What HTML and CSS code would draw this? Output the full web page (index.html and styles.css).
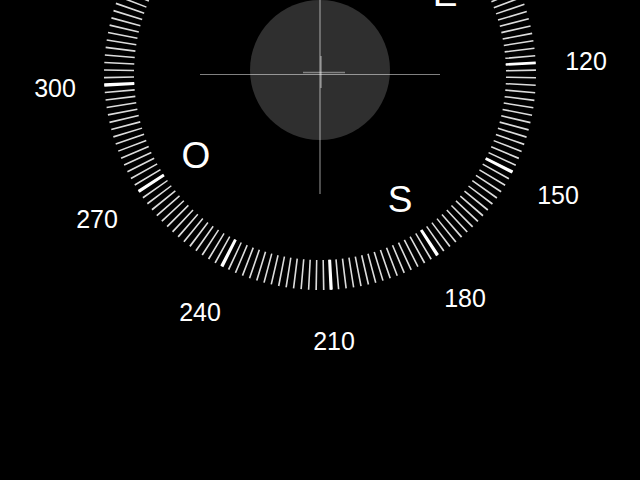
FILE: index.html
```html
<!DOCTYPE html>
<html lang="es">
<head>
<meta charset="UTF-8">
<meta name="viewport" content="width=device-width, initial-scale=1.0">
<title>Brújula</title>
<link rel="stylesheet" href="styles.css">
</head>
<body>

<div class="compass">
    <svg class="dial" width="640" height="480" viewBox="0 0 640 480">
        <!-- burbuja de nivel -->
        <circle class="bubble" cx="320" cy="70" r="70"/>

        <!-- anillo de marcas, girado a 33 grados -->
        <circle class="ticks-minor" cx="320" cy="74" r="201" transform="rotate(-3 320 74)"/>
        <circle class="ticks-major" cx="320" cy="74" r="201" transform="rotate(-3 320 74)"/>

        <!-- cruz -->
        <line class="cross" x1="320" y1="0" x2="320" y2="194"/>
        <line class="cross" x1="200" y1="74.5" x2="440" y2="74.5"/>
        <line class="cross-small" x1="303" y1="72.5" x2="345" y2="72.5"/>
        <line class="cross-small" x1="321" y1="56" x2="321" y2="88"/>

        <!-- puntos cardinales -->
        <text class="cardinal" x="445" y="6">E</text>
        <text class="cardinal" x="400" y="212">S</text>
        <text class="cardinal" x="196" y="168">O</text>

        <!-- grados -->
        <text class="degree" x="586" y="70">120</text>
        <text class="degree" x="558" y="204">150</text>
        <text class="degree" x="465" y="307">180</text>
        <text class="degree" x="334" y="350">210</text>
        <text class="degree" x="200" y="321">240</text>
        <text class="degree" x="97" y="228">270</text>
        <text class="degree" x="55" y="97">300</text>
    </svg>
</div>

</body>
</html>
```

FILE: styles.css
```css
body {
    margin: 0;
    padding: 0;
    background-color: #000;
    font-family: "Liberation Sans", Arial, sans-serif;
    overflow: hidden;
}

.compass {
    width: 640px;
    height: 480px;
}

.dial {
    display: block;
}

.bubble {
    fill: #2f2f2f;
}

/* 2 grados por marca: 2*pi*201 / 180 = 7.0162 */
.ticks-minor {
    fill: none;
    stroke: #dcdcdc;
    stroke-width: 30;
    stroke-dasharray: 1.6 5.4162;
    stroke-dashoffset: 0.8;
}

/* cada 30 grados */
.ticks-major {
    fill: none;
    stroke: #fff;
    stroke-width: 30;
    stroke-dasharray: 3.2 102.043;
    stroke-dashoffset: 1.6;
}

.cross {
    stroke: rgba(255, 255, 255, 0.5);
    stroke-width: 1.2;
}

.cross-small {
    stroke: rgba(255, 255, 255, 0.4);
    stroke-width: 1.5;
}

.cardinal {
    fill: #fff;
    font-size: 37px;
    text-anchor: middle;
}

.degree {
    fill: #fff;
    font-size: 25px;
    text-anchor: middle;
}
```
